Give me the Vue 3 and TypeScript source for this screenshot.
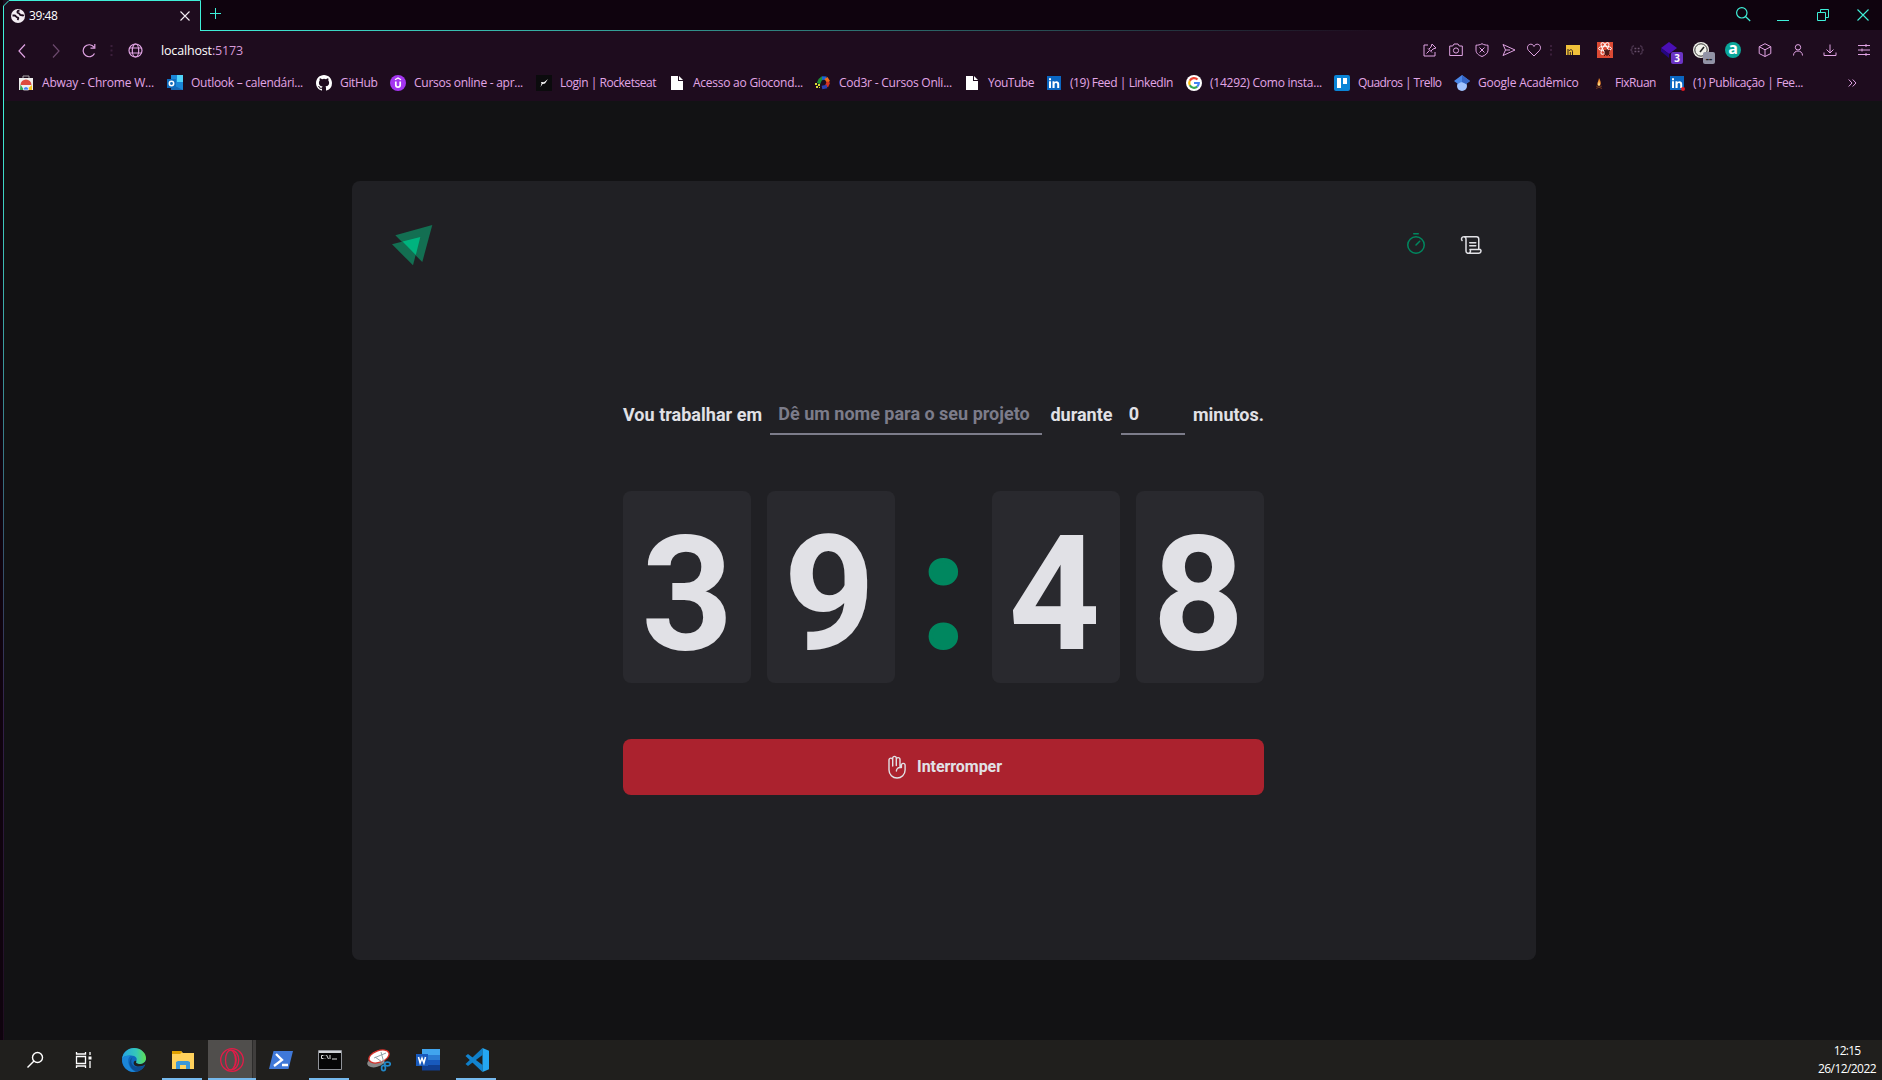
<script setup lang="ts">
import { ref } from 'vue'

interface Bookmark {
  icon: string
  label: string
  slot: number
  text: number
}

const bookmarks: Bookmark[] = [
  { icon: 'store', label: 'Abway - Chrome W...', slot: 149, text: 112 },
  { icon: 'outlook', label: 'Outlook – calendári...', slot: 149, text: 112 },
  { icon: 'github', label: 'GitHub', slot: 74, text: 37.5 },
  { icon: 'udemy', label: 'Cursos online - apr...', slot: 146, text: 109 },
  { icon: 'rocket', label: 'Login | Rocketseat', slot: 133, text: 96 },
  { icon: 'file', label: 'Acesso ao Giocond...', slot: 146, text: 110 },
  { icon: 'coder', label: 'Cod3r - Cursos Onli...', slot: 149, text: 113 },
  { icon: 'file', label: 'YouTube', slot: 82, text: 46 },
  { icon: 'linkedin', label: '(19) Feed | LinkedIn', slot: 140, text: 103 },
  { icon: 'google', label: '(14292) Como insta...', slot: 148, text: 112 },
  { icon: 'trello', label: 'Quadros | Trello', slot: 120, text: 83.5 },
  { icon: 'scholar', label: 'Google Acadêmico', slot: 137, text: 100.5 },
  { icon: 'flame', label: 'FixRuan', slot: 78, text: 41 },
  { icon: 'linkedin-dot', label: '(1) Publicação | Fee...', slot: 150, text: 110 },
]

const project = ref('')
const minutes = ref('0')
const time = ref('39:48')

// Distributes letter spacing so that a label takes the given width.
const vFit = {
  mounted(el: HTMLElement, binding: { value: number }) {
    const natural = el.getBoundingClientRect().width
    const count = (el.textContent ?? '').length
    if (count > 0) el.style.letterSpacing = `${(binding.value - natural) / count}px`
  },
}
</script>

<template>
  <div class="screen">
    <header class="titlebar">
      <div class="tab">
        <svg class="edge" width="201" height="31" viewBox="0 0 201 31" fill="none">
          <path d="M3.5 31V6L9 .5H200.5V31" stroke="#3ff0d9" />
        </svg>
        <svg class="tab-icon" width="14" height="14" viewBox="0 0 14 14">
          <circle cx="7" cy="7" r="7" fill="#f3edf3" />
          <path d="M1.500 6.500h2c1.500 0 1.500 2 3 2 1.300 0 .8 1.500 0 2.500M8.500 1.500C5.500 2 6 4 7.500 4.200s1 1.800 2.500 2c1.200.2 2-.2 2.800.6" stroke="#1e0c1e" stroke-width="1.800" fill="none" />
        </svg>
        <span v-fit="28.500" class="tab-title">{{ time }}</span>
        <svg class="tab-close" width="10" height="10" viewBox="0 0 10 10"><path d="M.5.5l9 9M9.500.5l-9 9" stroke="#f3edf3" stroke-width="1.100" /></svg>
      </div>
      <div class="strip">
        <svg width="12" height="12" viewBox="0 0 12 12"><path d="M5.500 0v11M0 5.500h11" stroke="#3ff0d9" /></svg>
        <div class="window-buttons">
          <svg width="15" height="15" viewBox="0 0 15 15" fill="none" stroke="#3ff0d9" stroke-width="1.200"><circle cx="5.800" cy="5.800" r="5.200" /><path d="M9.500 9.500l4.700 4.500" /></svg>
          <svg width="12" height="13" viewBox="0 0 12 13"><path d="M0 12.500h12" stroke="#3ff0d9" /></svg>
          <svg width="12" height="13" viewBox="0 0 12 13" fill="none" stroke="#3ff0d9"><path d="M.5 4.500h8v8h-8zM3.500 4.500v-3h8v8h-3" /></svg>
          <svg width="12" height="13" viewBox="0 0 12 13"><path d="M.5 1.500l11 11M11.500 1.500l-11 11" stroke="#3ff0d9" stroke-width="1.100" /></svg>
        </div>
      </div>
    </header>

    <nav class="toolbar">
      <div class="navigation">
        <svg width="8" height="14" viewBox="0 0 8 14"><path d="M7 .5L1 7l6 6.500" /></svg>
        <svg class="dim" width="8" height="14" viewBox="0 0 8 14"><path d="M1 .5L7 7l-6 6.500" /></svg>
        <svg width="15" height="14" viewBox="0 0 15 14"><path d="M12 3.200A6 6 0 1 0 12.500 9.500M12.800 0v4.200H8.500" /></svg>
        <svg width="3" height="11" viewBox="0 0 3 11"><path d="M1.500 0v2M1.500 4.500v2M1.500 9v2" stroke="#3b1f3b" stroke-width="2" /></svg>
        <svg width="15" height="15" viewBox="0 0 15 15"><circle cx="7.500" cy="7.500" r="6.500" /><ellipse cx="7.500" cy="7.500" rx="3.200" ry="6.500" /><path d="M1.500 5h12M1.500 10h12" /></svg>
      </div>
      <p class="url"><span v-fit="82"><b>localhost</b>:5173</span></p>
      <div class="tools">
        <svg style="left: 1423px" viewBox="0 0 14 14"><path d="M5 2H1v11h11V9M3.500 10.500l3-3M5 5.500l4 4M6 6l2-2 1-3 4 4-3 1-2 2" /></svg>
        <svg style="left: 1449px" viewBox="0 0 14 14"><path d="M.7 3h3l1.300-2h4l1.300 2h3v9.500H.7z" /><circle cx="7" cy="7.500" r="2.600" /></svg>
        <svg style="left: 1475px" viewBox="0 0 14 14"><path d="M7 .7c2 1.200 4 1.500 6 1.500v5c0 3-2.500 5-6 6.300C3.500 12.200 1 10.200 1 7.200v-5c2 0 4-.3 6-1.500zM4.500 4.500l5 5M9.500 4.500l-5 5" /></svg>
        <svg style="left: 1502px" viewBox="0 0 14 14"><path d="M1 1.500L13 7 1 12.500 3.500 7zM3.500 7H8" /></svg>
        <svg style="left: 1527px" viewBox="0 0 14 14"><path d="M7 13L1.500 7.500C-.8 4.500 1 1.200 3.800 1.200 5.500 1.200 6.500 2.300 7 3.500c.5-1.200 1.500-2.300 3.200-2.300 2.800 0 4.600 3.300 2.300 6.300z" /></svg>
        <svg style="left: 1544px" viewBox="0 0 14 14"><path d="M7 2v2M7 6v2M7 10.500v2" stroke="#3b1f3b" stroke-width="2" /></svg>
        <svg style="left: 1566px" viewBox="0 0 14 14"><path d="M0 2h14v10H0z" fill="#f0c03a" stroke="none" /><path d="M2 12V6M3 8c1-2 3.500-1.500 3.500.5V12M4.300 12V9" stroke="#2b1b1e" /></svg>
        <svg class="big" style="left: 1597px" viewBox="0 0 16 16"><path d="M0 0h16v16H0z" fill="#dc4a34" stroke="none" /><g stroke="#fff"><ellipse cx="8" cy="6.500" rx="6.500" ry="2.300" /><ellipse cx="8" cy="6.500" rx="6.500" ry="2.300" transform="rotate(60 8 6.500)" /><ellipse cx="8" cy="6.500" rx="6.500" ry="2.300" transform="rotate(120 8 6.500)" /></g><path d="M8 9l2-1.500L12 9v3l-2 1.500L8 12zM7 8l6 6M13 8l-6 6" fill="#4c1815" stroke="#4c1815" /></svg>
        <svg style="left: 1630px" viewBox="0 0 14 14"><path d="M4 3H3c-1 0-1 1-1 2s0 2-1.500 2C2 7 2 8 2 9s0 2 1 2h1M10 3h1c1 0 1 1 1 2s0 2 1.500 2C12 7 12 8 12 9s0 2-1 2h-1" stroke="#5c4460" /><path d="M4.500 5.500h1.800M4.500 8.500h1.800M7.700 5.500h1.800M7.700 8.500h1.800" stroke="#6b526e" stroke-width="1.300" /></svg>
        <svg class="big" style="left: 1661px" viewBox="0 0 16 16"><path d="M8 0l8 6-8 6-8-6z" fill="#4a0fb5" stroke="none" /><path d="M0 6l8 6v4L0 9.500z" fill="#250782" stroke="none" /></svg>
        <span class="badge" style="left: 1671px">3</span>
        <svg class="big" style="left: 1693px" viewBox="0 0 16 16"><circle cx="8" cy="8" r="8" fill="#f0f0ea" stroke="none" /><circle cx="8" cy="8" r="6.200" stroke="#333" /><path d="M7 10l4-5" stroke="#222" stroke-width="1.600" /></svg>
        <span class="badge grey" style="left: 1703px">--</span>
        <span class="letter" style="left: 1725px">a</span>
        <svg style="left: 1758px" viewBox="0 0 14 14"><path d="M7 .7l5.800 3v6.800L7 13.500l-5.800-3V3.700zM1.200 3.700L7 6.800l5.800-3.100M7 6.800v6.700" /></svg>
        <svg style="left: 1791px" viewBox="0 0 14 14"><circle cx="7" cy="4.300" r="2.700" /><path d="M2.500 12.500C2.500 6.500 11.500 6.500 11.500 12.500" /></svg>
        <svg style="left: 1823px" viewBox="0 0 14 14"><path d="M7 1.500v8M3.500 6.500L7 10l3.500-3.500M1 9.500v3h12v-3" /></svg>
        <svg style="left: 1857px" viewBox="0 0 14 14"><path d="M1 2.500h12M1 7h12M1 11.500h12M9 1v3M5 5.500v3M9 10v3" /></svg>
      </div>
    </nav>

    <nav class="bookmarks">
      <a v-for="b in bookmarks" :key="b.label" class="bookmark" :style="{ width: b.slot + 'px' }">
        <svg width="16" height="16" viewBox="0 0 16 16">
          <template v-if="b.icon === 'store'">
            <path d="M5 3V1h6v2" fill="none" stroke="#aaa" /><path d="M1 3h14v12H1z" fill="#eee" /><path d="M2.500 10a5.500 5.500 0 0 1 11 0z" fill="#dd4b3e" /><path d="M2.500 9.500L6 15H2z" fill="#35a853" /><path d="M14 10L8 15h6z" fill="#f6c21c" /><path d="M5.500 15a2.600 2.600 0 1 1 5 0z" fill="#4285f4" stroke="#fff" stroke-width=".7" />
          </template>
          <template v-else-if="b.icon === 'outlook'">
            <path d="M4 0h12v15H4z" fill="#1a87d8" /><path d="M10 0h6v7h-6z" fill="#50d4fb" /><path d="M4 9l12 6H4z" fill="#1467b5" /><path d="M0 4h9v9H0z" fill="#0f6cbd" /><circle cx="4.500" cy="8.500" r="2.200" fill="none" stroke="#fff" stroke-width="1.500" />
          </template>
          <path v-else-if="b.icon === 'github'" fill="#fff" d="M8 0C3.580 0 0 3.580 0 8c0 3.540 2.290 6.530 5.470 7.590.4.070.55-.17.55-.38 0-.19-.01-.82-.01-1.490-2.010.37-2.530-.49-2.690-.94-.09-.23-.48-.94-.82-1.130-.28-.15-.68-.52-.01-.53.63-.01 1.080.58 1.230.82.72 1.210 1.870.87 2.330.66.070-.52.28-.87.51-1.070-1.780-.2-3.640-.89-3.640-3.950 0-.87.31-1.590.82-2.150-.08-.2-.36-1.020.08-2.120 0 0 .67-.21 2.200.82a7.500 7.500 0 0 1 4 0c1.530-1.040 2.200-.82 2.200-.82.44 1.100.16 1.920.08 2.120.51.56.82 1.270.82 2.150 0 3.070-1.870 3.750-3.650 3.950.29.25.54.73.54 1.480 0 1.070-.01 1.930-.01 2.200 0 .21.15.46.55.38A8 8 0 0 0 16 8c0-4.420-3.580-8-8-8z" />
          <template v-else-if="b.icon === 'udemy'">
            <circle cx="8" cy="8" r="8" fill="#a435f0" /><path d="M5.800 6.500v3.500c0 2.700 4.400 2.700 4.400 0V6.500" fill="none" stroke="#fff" stroke-width="1.700" /><path d="M5 4.800l3-1.900 3 1.900" fill="none" stroke="#fff" stroke-width="1.200" />
          </template>
          <template v-else-if="b.icon === 'rocket'">
            <path d="M0 0h16v16H0z" fill="#0b0b0d" /><path d="M12 4l-3 4.500L6.500 9 4.500 12l1-3.500L5 7l3 .2z" fill="#fff" />
          </template>
          <path v-else-if="b.icon === 'file'" d="M2 1h7v5h5v9H2zM10 1l4 4h-4z" fill="#fff" />
          <template v-else-if="b.icon === 'coder'">
            <g fill="none" stroke-width="3.500"><path d="M3.500 8.500L5 5l3-2.500" stroke="#1c8f37" /><path d="M7 3l4.500.3" stroke="#1b63d8" /><path d="M11 3l2.500 4" stroke="#ef6a1c" /><path d="M13.500 7l-2 4.500" stroke="#d83120" /><path d="M12 11.500l-5 1" stroke="#2d3fb0" /></g><path d="M0 8h2v2H0zM3 9h2v2H3zM1 11h2v2H1zM4 12h1v1H4z" fill="#d7dd35" />
          </template>
          <template v-else-if="b.icon === 'linkedin' || b.icon === 'linkedin-dot'">
            <path d="M1 1h14v14H1z" fill="#0a66c2" /><path d="M3 6.300h2V13H3zM3 3.200h2v2H3zM6.500 6.300h2v1c1.200-1.800 4.700-1.500 4.700 1.700v4h-2V9.500c0-2-2.600-2-2.600 0V13h-2.100z" fill="#fff" /><circle v-if="b.icon === 'linkedin-dot'" cx="14" cy="14" r="2" fill="#e01b22" />
          </template>
          <template v-else-if="b.icon === 'google'">
            <circle cx="8" cy="8" r="8" fill="#fff" /><g fill="none" stroke-width="2.200"><path d="M11.500 4.500A4.800 4.800 0 0 0 3.800 5.800" stroke="#ea4335" /><path d="M3.800 5.800a4.800 4.800 0 0 0 0 4.500" stroke="#fbbc05" /><path d="M3.800 10.300a4.800 4.800 0 0 0 7.400 1.300" stroke="#34a853" /><path d="M11.200 11.600A4.800 4.800 0 0 0 12.800 8H8" stroke="#4285f4" /></g>
          </template>
          <template v-else-if="b.icon === 'trello'">
            <rect width="16" height="16" rx="2" fill="#0a84d6" /><path d="M3 3h4v10H3zM9 3h4v6H9z" fill="#fff" />
          </template>
          <template v-else-if="b.icon === 'scholar'">
            <circle cx="8" cy="11" r="5" fill="#a0c3ff" /><path d="M8 0l8 6-4 3c-2-2.500-6-2.500-8 0L0 6z" fill="#4a87e8" /><path d="M8 0l8 6-4 3-4-2z" fill="#3567c8" />
          </template>
          <template v-else>
            <path d="M8 3c1.500 3 2.500 5 1.200 7.500H6.800C5.500 8.500 7.500 6.500 8 3z" fill="#f08a2c" /><path d="M8 6l1 4.500H7z" fill="#fff3a0" /><path d="M5 13.500l6-2.500M5 11l6 2.500" stroke="#6d3620" />
          </template>
        </svg>
        <span v-fit="b.text">{{ b.label }}</span>
      </a>
      <svg class="more" width="9" height="8" viewBox="0 0 9 8" fill="none" stroke="#e0a3e3"><path d="M.7.5L4 4 .7 7.500M4.700.5L8 4 4.700 7.500" /></svg>
    </nav>

    <div class="viewport">
      <div class="rail"></div>
      <main class="page">
        <section class="card">
          <header class="card-header">
            <svg width="41" height="41" viewBox="0 0 41 41">
              <path d="M3.300 10.300L40.300 0 30.300 37z" fill="#136f52" />
              <path d="M0 19.300L28.300 12 21 40.300z" fill="#136f52" />
              <path d="M10.500 16.600L28.300 12 23.800 30z" fill="#00b37e" />
            </svg>
            <div class="links">
              <a><svg viewBox="0 0 256 256" stroke="#00875f"><circle cx="128" cy="128" r="88" /><path d="M128 128l39.600-39.600M104 8h48" /></svg></a>
              <a><svg viewBox="0 0 256 256" stroke="#e1e1e6"><path d="M104 104h64M104 136h64M200 176V64a24 24 0 0 0-24-24H40M22.100 80A24 24 0 1 1 64 64v128a24 24 0 1 0 41.900-16h112A24 24 0 0 1 200 216H88" /></svg></a>
            </div>
          </header>
          <form class="timer" @submit.prevent>
            <div class="fields">
              <label v-fit="139">Vou trabalhar em</label>
              <input v-model="project" class="project" placeholder="Dê um nome para o seu projeto" />
              <label v-fit="62">durante</label>
              <input v-model="minutes" class="minutes" />
              <span v-fit="71">minutos.</span>
            </div>
            <div class="countdown">
              <span class="digit">{{ time[0] }}</span>
              <span class="digit">{{ time[1] }}</span>
              <span class="separator">:</span>
              <span class="digit">{{ time[3] }}</span>
              <span class="digit">{{ time[4] }}</span>
            </div>
            <button type="submit">
              <svg width="24" height="24" viewBox="0 0 24 24" fill="none" stroke="#e1e1e6" stroke-width="1.400" stroke-linecap="round" stroke-linejoin="round">
                <path d="M7.700 11V3.200a1.800 1.800 0 0 1 3.600 0V10.500M11.300 10.500V4.500a1.800 1.800 0 0 1 3.700 0V12.500M7.700 11V5a1.850 1.850 0 0 0-3.700 0V15a8.050 8.050 0 0 0 16.100 0V10.200a1.850 1.850 0 0 0-3.700 0V12.500H15a3.600 3.600 0 0 0-3.600 3.600" />
              </svg>
              <span v-fit="85">Interromper</span>
            </button>
          </form>
        </section>
      </main>
    </div>

    <footer class="taskbar">
      <div class="app"><svg width="18" height="18" viewBox="0 0 18 18" fill="none" stroke="#fff" stroke-width="1.400"><circle cx="11.500" cy="6.500" r="5" /><path d="M8 10L1.500 16.500" /></svg></div>
      <div class="app"><svg width="18" height="16" viewBox="0 0 18 16" fill="none" stroke="#fff" stroke-width="1.300"><path d="M1.500 4.500h9v7h-9zM1.500 0v2h9V0M1.500 16v-2h9v2M15 0v3M15 9v7" /><path d="M13.500 4.500h3v3h-3z" fill="#fff" stroke="none" /></svg></div>
      <div class="app">
        <svg width="24" height="24" viewBox="0 0 24 24">
          <defs><linearGradient id="edge-top" x1="0" x2="1"><stop offset="0" stop-color="#25a4e4" /><stop offset=".6" stop-color="#35c8b8" /><stop offset="1" stop-color="#5fe052" /></linearGradient></defs>
          <circle cx="12" cy="12" r="12" fill="#0f69bd" />
          <path d="M0 11C1 4 6 0 12 0c7 0 12 5 12 10 0 4-3 6-6 6-3 0-5-1-4-2.500 2-2.500 0-6-5-6C5 7.500 1 8.500 0 11z" fill="url(#edge-top)" />
          <path d="M0 11c1-3 5-4 9-3.500C6 9 5.500 13 7 17c1 3 4 6 7 6.800C6 25 0 19 0 11z" fill="#1b86d8" />
          <path d="M10.500 9.500c-2 2-1.500 7 1.500 8.500s8 1 10-.5c.5-.3 1 0 .7.500C21 21 18 23 15.500 23.500 10 23 6 17 8 12.500c.5-1.500 1.500-2.500 2.500-3z" fill="#0d4d91" />
          <path d="M14.500 13c-1.500 2 1 3.200 4 3 2.500-.2 4.500-1.500 5.500-4v3.500c-2 3-10 4.500-12 1-1.200-2 .5-4.500 2.500-3.500z" fill="#201f1e" />
        </svg>
      </div>
      <div class="app open"><svg width="22" height="20" viewBox="0 0 22 20"><path d="M0 1h9l2 2h11v16H0z" fill="#ffd15c" /><path d="M0 1h9l1 1.500L8 4H0z" fill="#dfa000" /><path d="M4 19v-7l2-1h10l2 1v7h-4v-4H8v4z" fill="#3c98d9" /></svg></div>
      <div class="app open active"><svg width="24" height="24" viewBox="0 0 24 24" fill="none" stroke="#e21c48" stroke-width="1.300"><circle cx="12" cy="12" r="11.300" /><ellipse cx="10.500" cy="12" rx="5" ry="9.800" /><path d="M10.500 2.200c11 0 11 19.600 0 19.600M14 5c3 3.500 3 10.500 0 14" /></svg></div>
      <div class="app"><svg width="24" height="18" viewBox="0 0 24 18"><path d="M4.500 0H24l-4.500 18H0z" fill="#3f78d8" /><path d="M7 3l6 6-8 6M13 14h6" fill="none" stroke="#fff" stroke-width="2.300" /></svg></div>
      <div class="app open"><svg width="24" height="20" viewBox="0 0 24 20"><path d="M.5.5h23v19H.5z" fill="#060606" stroke="#909399" /><path d="M1 1h22v2H1z" fill="#d1d4d8" /><path d="M5.500 5.500H3.500v3h2M7 5.500v.5M7 8v.5M8.500 5l2 4M12 5v4M14 9h5" fill="none" stroke="#ddd" /></svg></div>
      <div class="app"><svg width="24" height="23" viewBox="0 0 24 23"><ellipse cx="9" cy="13" rx="9" ry="5" fill="#898989" transform="rotate(-15 9 13)" /><ellipse cx="12" cy="7.500" rx="10.500" ry="5.800" fill="#fff" stroke="#d7322b" stroke-width="1.300" transform="rotate(-20 12 7.500)" /><path d="M14 3l3 11M7 9l12-5M8 8l10 7" stroke="#8fa0a8" /><g fill="none" stroke="#2188c8" stroke-width="1.700"><ellipse cx="20.500" cy="15" rx="2.800" ry="1.900" /><ellipse cx="16.500" cy="19" rx="1.900" ry="2.700" /></g></svg></div>
      <div class="app">
        <svg width="24" height="22" viewBox="0 0 24 22"><path d="M6 0h18v6H6z" fill="#41a5ee" /><path d="M6 6h18v5H6z" fill="#2b7cd3" /><path d="M6 11h18v5H6z" fill="#185abd" /><path d="M6 16h18v5.500H6z" fill="#103f91" /><path d="M0 5h12v12H0z" fill="#185abd" /><path d="M2.500 8l1.600 6L6 9l1.900 5 1.600-6" fill="none" stroke="#fff" stroke-width="1.500" /></svg>
      </div>
      <div class="app open"><svg width="24" height="24" viewBox="0 0 24 24"><path d="M17.500 0v7L3 18l-2.500-2z" fill="#0f7fc9" /><path d="M17.500 24v-7L3 6 .5 8z" fill="#1384cf" /><path d="M17.500 0L24 2.800v18.400L17.500 24z" fill="#24a7f2" /></svg></div>
      <div class="clock"><span v-fit="26.500">12:15</span><span v-fit="58">26/12/2022</span></div>
    </footer>
  </div>
</template>

<style>
body {
  background: #121214;
  overflow: hidden;
}
</style>

<style scoped>
* {
  box-sizing: border-box;
}
.screen {
  width: 1882px;
  height: 1080px;
  display: flex;
  flex-direction: column;
  overflow: hidden;
  font: 12px/16px "Open Sans", "Noto Sans", sans-serif;
  color: #fff;
  background: #1e0c1e;
}
svg {
  flex: none;
  display: block;
}
span {
  white-space: nowrap;
}
.titlebar {
  height: 31px;
  display: flex;
  background: #0f030e;
}
.tab {
  position: relative;
  width: 201px;
  display: flex;
  align-items: center;
  padding: 0 11px 0 11px;
  background: linear-gradient(90deg, #0f030e 3px, #1e0c1e 3px);
}
.edge {
  position: absolute;
  left: 0;
  top: 0;
}
.tab-title {
  margin-left: 4px;
  font-size: 12px;
}
.tab-close {
  margin-left: auto;
}
.strip {
  flex: 1;
  display: flex;
  justify-content: space-between;
  padding: 8px 13px 0 9px;
  border-bottom: 1px solid #3ff0d9;
  border-image: linear-gradient(90deg, #3ff0d9, #1e0c1e 70%) 1;
}
.window-buttons {
  display: flex;
  align-items: flex-start;
  gap: 28px;
}
.window-buttons svg:first-child {
  margin: -1px -2px 0 0;
}
.toolbar {
  position: relative;
  height: 39px;
  display: flex;
  align-items: center;
  border-left: 3px solid #0f030e;
  box-shadow: inset 1px 0 #3ff0d9;
}
.navigation {
  display: flex;
  align-items: center;
  padding-left: 15px;
  fill: none;
  stroke: #e0a3e3;
  stroke-width: 1.2;
}
.navigation svg:nth-child(2) {
  margin-left: 26px;
}
.navigation svg:nth-child(3) {
  margin-left: 22px;
}
.navigation svg:nth-child(4) {
  margin-left: 13px;
}
.navigation svg:nth-child(5) {
  margin-left: 15px;
}
.dim {
  opacity: 0.4;
}
.url {
  margin: 0 0 0 18px;
  font-size: 12.5px;
  color: #d79ad9;
}
.url b {
  color: #fff;
  font-weight: 400;
}
.tools {
  position: absolute;
  inset: 0;
  left: -3px;
  fill: none;
  stroke: #e0a3e3;
}
.tools svg {
  position: absolute;
  top: 12px;
  width: 14px;
  height: 14px;
}
.tools svg.big {
  top: 11px;
  width: 16px;
  height: 16px;
}
.badge {
  position: absolute;
  top: 21px;
  width: 12px;
  height: 12px;
  border-radius: 2px;
  background: #6b34c4;
  font: bold 10px/12px "Open Sans", sans-serif;
  text-align: center;
}
.badge.grey {
  background: #9293a6;
  color: #222;
}
.letter {
  position: absolute;
  top: 11px;
  width: 16px;
  height: 16px;
  border-radius: 50%;
  background: #0aa699;
  font: bold 16px/13px "Open Sans", sans-serif;
  text-align: center;
}
.bookmarks {
  height: 31px;
  display: flex;
  padding-left: 15px;
  padding-bottom: 5px;
  align-items: center;
  border-left: 3px solid #0f030e;
  box-shadow: inset 1px 0 #3ff0d9;
}
.bookmark {
  flex: none;
  display: flex;
  gap: 8px;
  align-items: center;
  color: #e2a6e6;
}
.more {
  margin-left: 29px;
}
.viewport {
  flex: 1;
  display: flex;
  background: #121214;
}
.rail {
  width: 4px;
  background: linear-gradient(#3ff0d9, #33204a 65%, #1e0c1e) right / 1px 100% no-repeat #0f030e;
}
.page {
  flex: 1;
  padding: 80px 0 0 348px;
}
.card {
  width: 1184px;
  height: 779px;
  padding: 40px;
  display: flex;
  flex-direction: column;
  border-radius: 8px;
  background: #202024;
}
.card-header {
  height: 48px;
  display: flex;
  align-items: center;
  justify-content: space-between;
}
.links {
  display: flex;
  gap: 8px;
}
.links a {
  width: 48px;
  height: 48px;
  display: flex;
  align-items: center;
  justify-content: center;
}
.links svg {
  width: 24px;
  height: 24px;
  fill: none;
  stroke-width: 16;
  stroke-linecap: round;
  stroke-linejoin: round;
}
.timer {
  flex: 1;
  display: flex;
  flex-direction: column;
  align-items: center;
  justify-content: center;
  gap: 56px;
  padding-right: 1px;
  color: #e1e1e6;
}
.fields {
  width: 641px;
  height: 40px;
  display: flex;
  align-items: center;
  justify-content: space-between;
  font: bold 18px/29px Roboto, sans-serif;
}
.fields input {
  height: 40px;
  padding: 0 8px;
  border: 0;
  border-bottom: 2px solid #7c7c8a;
  background: transparent;
  font: inherit;
  color: #e1e1e6;
  outline: 0;
}
.fields .project {
  width: 272px;
}
.fields .minutes {
  width: 64px;
}
.fields input::placeholder {
  color: #7c7c8a;
  opacity: 1;
}
.countdown {
  display: flex;
  gap: 16px;
  font: bold 160px/128px Roboto, sans-serif;
}
.digit {
  width: 128px;
  height: 192px;
  padding: 40px 3px 24px 0;
  border-radius: 8px;
  background: #29292e;
  text-align: center;
}
.digit:first-child {
  padding-right: 0;
  padding-left: 1px;
}
.separator {
  width: 65px;
  height: 192px;
  padding: 38px 0 26px;
  display: flex;
  justify-content: center;
  color: #00875f;
  -webkit-text-stroke: 4px #00875f;
}
button {
  width: 641px;
  height: 56px;
  padding: 0;
  display: flex;
  align-items: center;
  justify-content: center;
  gap: 8px;
  border: 0;
  border-radius: 8px;
  background: #ab222e;
  color: #e1e1e6;
  font: bold 16px/24px Roboto, sans-serif;
}
.taskbar {
  height: 40px;
  display: flex;
  padding-left: 10px;
  background: #201f1d;
}
.app {
  position: relative;
  width: 49px;
  display: flex;
  align-items: center;
  justify-content: center;
}
.app:nth-child(2) {
  margin-right: 1px;
}
.open::after {
  content: "";
  position: absolute;
  left: 4px;
  bottom: 0;
  width: 40px;
  height: 2px;
  background: #76b9ed;
}
.active {
  margin-left: 1px;
  width: 48px;
  background: linear-gradient(90deg, #504e4c 44px, #2d2c2b 44px, #2d2c2b 45px, #403e3d 45px);
}
.active::after {
  left: 0;
  width: 48px;
}
.clock {
  margin-left: auto;
  padding: 2px 6px 0 0;
  display: flex;
  flex-direction: column;
  align-items: center;
  line-height: 18px;
}
</style>
